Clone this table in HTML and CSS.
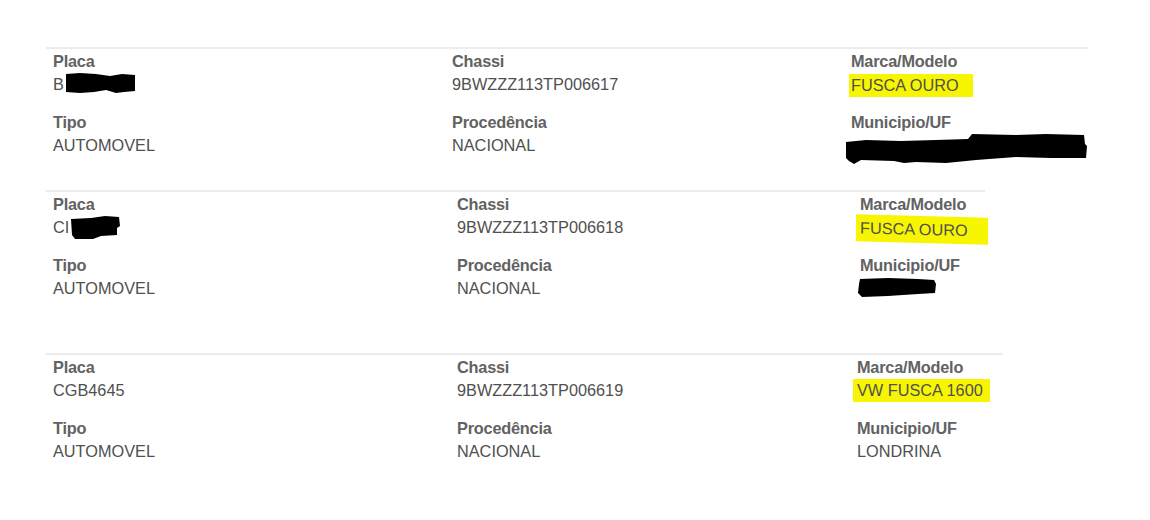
FILE: index.html
```html
<!DOCTYPE html>
<html lang="pt-BR">
<head>
<meta charset="utf-8">
<title>Veículos</title>
<link rel="stylesheet" href="styles.css">
</head>
<body>
<main class="list">
  <section class="veh veh--a">
    <div class="field">
      <div class="lbl">Placa</div>
      <div class="val">B<svg class="blob blob--p1" width="70" height="20" viewBox="0 0 70 20"><path d="M0,1 L14,0 L30,1 L44,3 L56,1 L69,2 L69,18 L58,19 L50,20 L40,17 L28,19 L14,20 L0,19 Z"/></svg></div>
    </div>
    <div class="field">
      <div class="lbl">Chassi</div>
      <div class="val">9BWZZZ113TP006617</div>
    </div>
    <div class="field">
      <div class="lbl">Marca/Modelo</div>
      <div class="val"><span class="hl hl--a">FUSCA OURO</span></div>
    </div>
    <div class="field">
      <div class="lbl">Tipo</div>
      <div class="val">AUTOMOVEL</div>
    </div>
    <div class="field">
      <div class="lbl">Procedência</div>
      <div class="val">NACIONAL</div>
    </div>
    <div class="field">
      <div class="lbl">Municipio/UF</div>
      <div class="val val--redacted"><svg class="blob blob--m1" width="242" height="30" viewBox="0 0 242 30"><path d="M0,8 L20,6 L55,7 L90,6 L122,5 L126,0 L170,1 L200,0 L238,1 L239,10 L241,12 L240,24 L205,24 L170,23 L130,26 L100,29 L70,28 L58,29 L48,27 L15,26 L8,30 L3,27 L0,24 Z"/></svg></div>
    </div>
  </section>

  <section class="veh veh--b">
    <div class="field">
      <div class="lbl">Placa</div>
      <div class="val">CI<svg class="blob blob--p2" width="50" height="24" viewBox="0 0 50 24"><path d="M0,3 L20,2 L34,0 L48,1 L49,10 L46,12 L46,19 L30,20 L22,23 L4,23 L1,19 Z"/></svg></div>
    </div>
    <div class="field">
      <div class="lbl">Chassi</div>
      <div class="val">9BWZZZ113TP006618</div>
    </div>
    <div class="field">
      <div class="lbl">Marca/Modelo</div>
      <div class="val"><span class="hl hl--b">FUSCA OURO</span></div>
    </div>
    <div class="field">
      <div class="lbl">Tipo</div>
      <div class="val">AUTOMOVEL</div>
    </div>
    <div class="field">
      <div class="lbl">Procedência</div>
      <div class="val">NACIONAL</div>
    </div>
    <div class="field">
      <div class="lbl">Municipio/UF</div>
      <div class="val val--redacted"><svg class="blob blob--m2" width="80" height="20" viewBox="0 0 80 20"><path d="M2,1 L30,0 L60,1 L76,2 L78,6 L77,15 L60,16 L30,18 L4,19 L0,15 L1,6 Z"/></svg></div>
    </div>
  </section>

  <section class="veh veh--c">
    <div class="field">
      <div class="lbl">Placa</div>
      <div class="val">CGB4645</div>
    </div>
    <div class="field">
      <div class="lbl">Chassi</div>
      <div class="val">9BWZZZ113TP006619</div>
    </div>
    <div class="field">
      <div class="lbl">Marca/Modelo</div>
      <div class="val"><span class="hl hl--c">VW FUSCA 1600</span></div>
    </div>
    <div class="field">
      <div class="lbl">Tipo</div>
      <div class="val">AUTOMOVEL</div>
    </div>
    <div class="field">
      <div class="lbl">Procedência</div>
      <div class="val">NACIONAL</div>
    </div>
    <div class="field">
      <div class="lbl">Municipio/UF</div>
      <div class="val">LONDRINA</div>
    </div>
  </section>
</main>
</body>
</html>
```

FILE: styles.css
```css
html, body {
  margin: 0;
  padding: 0;
  background: #ffffff;
}

body {
  font-family: "Liberation Sans", Arial, sans-serif;
  font-size: 16.3px;
  color: #505050;
}

.list {
  padding: 47px 0 0 46px;
  display: flex;
  flex-direction: column;
  align-items: flex-start;
}

.veh {
  display: grid;
  row-gap: 15px;
  border-top: 2px solid #ececec;
  padding-left: 7px;
  padding-top: 1px;
  box-sizing: border-box;
}

.veh--a {
  width: 1042px;
  grid-template-columns: 399px 399px 1fr;
  margin-bottom: 33px;
}

.veh--b {
  width: 939px;
  grid-template-columns: 404px 403px 1fr;
  margin-bottom: 52px;
}

.veh--c {
  width: 957px;
  grid-template-columns: 404px 400px 1fr;
}

.lbl {
  font-weight: bold;
  color: #626262;
  line-height: 23px;
  letter-spacing: -0.2px;
}

.val {
  line-height: 23px;
  height: 23px;
  color: #505050;
  white-space: nowrap;
}

.blob {
  fill: #000000;
  vertical-align: top;
}

.blob--p1 {
  margin-left: 2px;
  margin-top: 0;
}

.blob--p2 {
  margin-left: 2px;
  margin-top: 0;
}

.blob--m1 {
  display: block;
  margin-left: -5px;
  margin-top: 0;
}

.blob--m2 {
  display: block;
  margin-left: -2px;
  margin-top: 1px;
}

.hl {
  display: inline-block;
  background: #f7f500;
  margin-left: -2px;
  padding: 0 14px 0 2px;
  line-height: 23px;
}

.hl--a {
  transform: translateY(1px);
}

.hl--b {
  padding: 2px 20px 2px 4px;
  margin-left: -4px;
  transform: translateY(0) skewY(1.5deg);
}

.hl--c {
  padding-right: 7px;
  margin-left: -4px;
  padding-left: 4px;
  transform: translateY(0);
}
```
